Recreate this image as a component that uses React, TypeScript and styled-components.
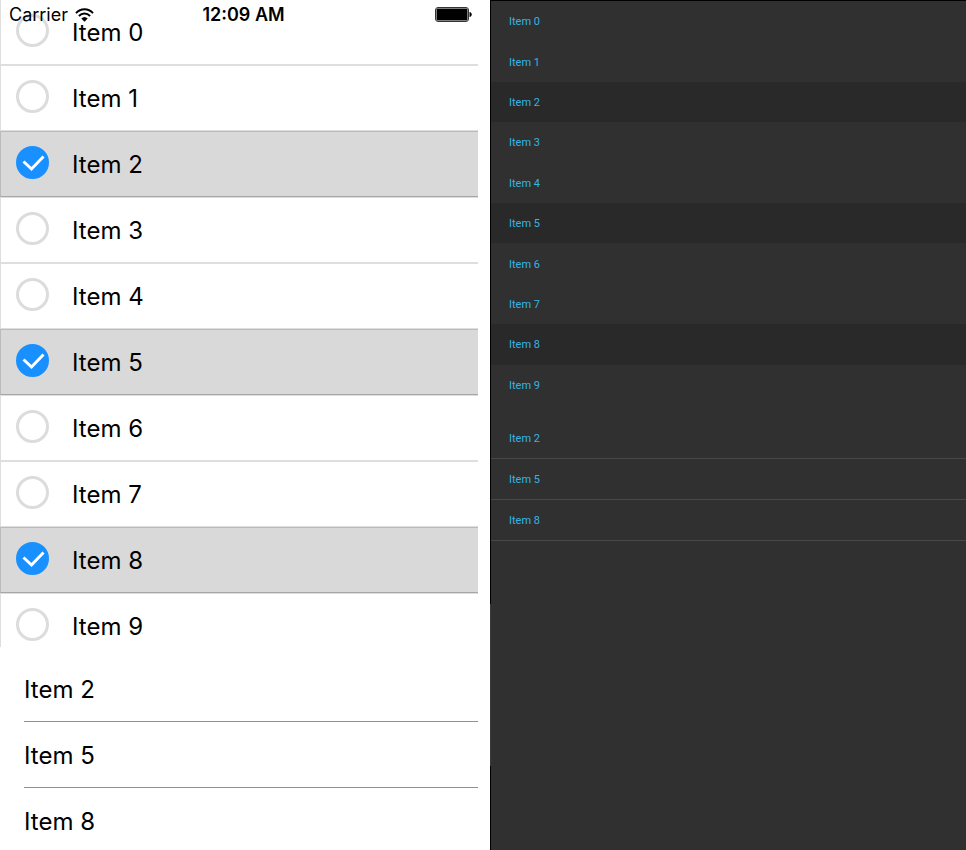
import React, { useState } from "react";
import styled, { createGlobalStyle } from "styled-components";

const GlobalStyle = createGlobalStyle`
  * { box-sizing: border-box; }
  body { margin: 0; background: #fff; }
`;

const Page = styled.main`
  display: grid;
  grid-template-columns: 478fr 476fr;
  column-gap: 12px;
  height: 100vh;
  overflow: hidden;
`;

const LightPhone = styled.section`
  position: relative;
  display: grid;
  grid-template-rows: minmax(0, 1fr) 203px;
  overflow: hidden;
  background: #fff;
  color: #000;
  font-family: Inter, "Liberation Sans", sans-serif;
  font-size: 24px;
  line-height: 30px;
`;

const StatusBar = styled.header`
  position: absolute;
  top: 0;
  left: 0;
  right: 0;
  display: grid;
  grid-template-columns: 1fr auto 1fr;
  align-items: center;
  height: 29px;
  padding-left: 9px;
  font-size: 18px;
  line-height: 29px;
`;

const Carrier = styled.div`
  display: flex;
  align-items: center;
  gap: 7px;
`;

const Clock = styled.time`
  font-weight: 600;
`;

const BatterySlot = styled.div`
  display: flex;
  justify-content: flex-end;
  padding-right: 6px;
`;

const CheckList = styled.ul`
  margin: 0;
  padding: 0;
  list-style: none;
  overflow: hidden;
`;

const CheckRow = styled.label<{ $on: boolean }>`
  display: flex;
  align-items: flex-start;
  gap: 23px;
  height: 66px;
  padding: 14px 15px 0;
  border: solid ${(p) => (p.$on ? "#bbb" : "#dedede")};
  border-width: 1px 0 1px 1px;
  border-bottom-color: ${(p) => (p.$on ? "#a6a6a6" : "#dedede")};
  background: ${(p) => (p.$on ? "#d9d9d9" : "#fff")};

  li:first-child > & {
    height: 65px;
    border-top: 0;
  }
`;

const Tick = styled.span`
  position: relative;
  display: block;
  width: 33px;
  height: 33px;
`;

const TickInput = styled.input`
  appearance: none;
  display: block;
  width: 33px;
  height: 33px;
  margin: 0;
  border: 3px solid #dcdcdc;
  border-radius: 50%;
  background: #fff;

  &:checked {
    border-color: #1890ff;
    background: #1890ff;
  }
`;

const TickMark = styled.svg`
  position: absolute;
  inset: 0;
  pointer-events: none;
`;

const RowText = styled.span`
  padding-top: 4px;
`;

const ChosenList = styled.ul`
  margin: 0;
  padding: 9px 0 0 24px;
  list-style: none;
  overflow: hidden;
`;

const ChosenRow = styled.li`
  display: flex;
  align-items: center;
  height: 66px;
  padding-top: 2px;
  border-bottom: 1px solid #909090;
`;

const DarkPhone = styled.section`
  padding-top: 1px;
  border-left: 1px solid;
  border-image: linear-gradient(#000 71%, #3a3a3a 71% 90%, #000 90%) 1;
  background: #303030;
  box-shadow: inset 0 1px #000;
  color: #33b5e5;
  font-family: Roboto, "Liberation Sans", sans-serif;
  font-size: 11px;
  line-height: 16px;
`;

const DarkList = styled.ul`
  display: grid;
  grid-template-rows: repeat(10, 1fr);
  height: 404px;
  margin: 0 0 13px;
  padding: 0;
  list-style: none;
`;

const DarkRow = styled.button<{ $on: boolean }>`
  display: flex;
  align-items: center;
  width: 100%;
  height: 100%;
  padding: 2px 18px 0;
  border: 0;
  background: ${(p) => (p.$on ? "#292929" : "transparent")};
  color: inherit;
  font: inherit;
`;

const DarkChosenList = styled.ul`
  margin: 0;
  padding: 0;
  list-style: none;
`;

const DarkChosenRow = styled.li`
  display: flex;
  align-items: center;
  height: 41px;
  padding: 2px 18px 0;
  border-bottom: 1px solid #484848;
`;

const items = Array.from({ length: 10 }, (_, i) => i);

function WifiIcon() {
  return (
    <svg width="19" height="14" viewBox="0 0 19 14" fill="none" stroke="#000" strokeWidth="2" aria-hidden="true">
      <path d="M1 5.1C5.8 0 13.2 0 18 5.1" />
      <path d="M3.9 8C7.1 4.7 11.9 4.7 15.1 8" />
      <path d="M6.3 10.6Q9.5 7.6 12.7 10.6L9.5 13.8Z" fill="#000" stroke="none" />
    </svg>
  );
}

function BatteryIcon() {
  return (
    <svg width="37" height="15" viewBox="0 0 37 15" aria-hidden="true">
      <rect x="0.5" y="0.5" width="33" height="14" rx="2.5" fill="#fff" stroke="#333" />
      <rect x="1.5" y="1.5" width="31" height="12" rx="1" fill="#000" />
      <path d="M34.5 5C37.5 5.4 37.5 9.6 34.5 10Z" fill="#000" />
    </svg>
  );
}

export default function App() {
  const [chosen, setChosen] = useState<number[]>([2, 5, 8]);
  const toggle = (n: number) =>
    setChosen((c) => (c.includes(n) ? c.filter((x) => x !== n) : [...c, n].sort()));

  return (
    <>
      <GlobalStyle />
      <Page>
        <LightPhone>
          <CheckList>
            {items.map((n) => {
              const on = chosen.includes(n);
              return (
                <li key={n}>
                  <CheckRow $on={on}>
                    <Tick>
                      <TickInput type="checkbox" checked={on} onChange={() => toggle(n)} />
                      {on && (
                        <TickMark width="33" height="33" viewBox="0 0 33 33">
                          <path d="M7.5 15.5L15.5 23L27.5 10.5" fill="none" stroke="#fff" strokeWidth="3" />
                        </TickMark>
                      )}
                    </Tick>
                    <RowText>Item {n}</RowText>
                  </CheckRow>
                </li>
              );
            })}
          </CheckList>
          <ChosenList>
            {chosen.map((n) => (
              <ChosenRow key={n}>Item {n}</ChosenRow>
            ))}
          </ChosenList>
          <StatusBar>
            <Carrier>
              Carrier
              <WifiIcon />
            </Carrier>
            <Clock>12:09 AM</Clock>
            <BatterySlot>
              <BatteryIcon />
            </BatterySlot>
          </StatusBar>
        </LightPhone>
        <DarkPhone>
          <DarkList>
            {items.map((n) => (
              <li key={n}>
                <DarkRow type="button" $on={chosen.includes(n)} onClick={() => toggle(n)}>
                  Item {n}
                </DarkRow>
              </li>
            ))}
          </DarkList>
          <DarkChosenList>
            {chosen.map((n) => (
              <DarkChosenRow key={n}>Item {n}</DarkChosenRow>
            ))}
          </DarkChosenList>
        </DarkPhone>
      </Page>
    </>
  );
}
